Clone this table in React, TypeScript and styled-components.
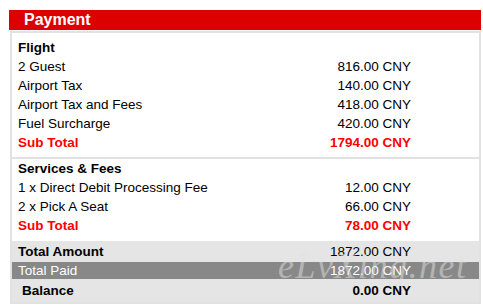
import React from "react";
import styled, { createGlobalStyle } from "styled-components";

const Global = createGlobalStyle`
  html, body { margin: 0; padding: 0; background: #fff; overflow: hidden; }
  body { font-family: "Liberation Sans", Arial, sans-serif; color: #000; }
`;

const Page = styled.div`
  position: relative;
  width: 472px;
  padding: 10px 0 0 9px;
`;

const Header = styled.div`
  height: 20px;
  background: #dd0000;
  color: #fff;
  font-weight: bold;
  font-size: 16px;
  line-height: 20px;
  padding-left: 15px;
`;

const Box = styled.div`
  margin: 1px 0 0 1px;
  border: 2px solid #e2e2e2;
  background: #fff;
`;

const Section = styled.div<{ $top: number; $bottom: number; $divider?: boolean }>`
  padding: ${(p) => p.$top}px 68px ${(p) => p.$bottom}px 6px;
  border-top: ${(p) => (p.$divider ? "2px solid #e2e2e2" : "none")};
`;

const Row = styled.div<{ $tone?: "red" }>`
  display: flex;
  justify-content: space-between;
  height: 19px;
  line-height: 19px;
  font-size: 13.5px;
  color: ${(p) => (p.$tone === "red" ? "#ff0000" : "#000")};
  font-weight: ${(p) => (p.$tone === "red" ? "bold" : "normal")};
`;

const Title = styled.div`
  height: 19px;
  line-height: 19px;
  font-size: 13.5px;
  font-weight: bold;
`;

const TotalRow = styled.div<{ $h: number; $dark?: boolean; $indent?: number }>`
  display: flex;
  justify-content: space-between;
  align-items: center;
  height: ${(p) => p.$h}px;
  padding: 0 68px 0 ${(p) => 6 + (p.$indent || 0)}px;
  background: ${(p) => (p.$dark ? "#888888" : "#e5e5e5")};
  color: ${(p) => (p.$dark ? "#fff" : "#000")};
  font-size: 13.5px;
`;

const Label = styled.span<{ $bold?: boolean }>`
  font-weight: ${(p) => (p.$bold ? "bold" : "normal")};
`;

const Watermark = styled.div`
  position: absolute;
  left: 278px;
  top: 246px;
  width: 196px;
  font-family: "Liberation Serif", serif;
  font-style: italic;
  font-size: 36px;
  line-height: 40px;
  letter-spacing: 1.5px;
  color: rgba(225, 225, 225, 0.5);
  pointer-events: none;
  white-space: nowrap;
`;

const flight = [
  ["2 Guest", "816.00 CNY"],
  ["Airport Tax", "140.00 CNY"],
  ["Airport Tax and Fees", "418.00 CNY"],
  ["Fuel Surcharge", "420.00 CNY"],
];

const services = [
  ["1 x Direct Debit Processing Fee", "12.00 CNY"],
  ["2 x Pick A Seat", "66.00 CNY"],
];

export default function App() {
  return (
    <>
      <Global />
      <Page>
        <Header>Payment</Header>
        <Box>
          <Section $top={5} $bottom={5}>
            <Title>Flight</Title>
            {flight.map(([l, v]) => (
              <Row key={l}>
                <span>{l}</span>
                <span>{v}</span>
              </Row>
            ))}
            <Row $tone="red">
              <span>Sub Total</span>
              <span>1794.00 CNY</span>
            </Row>
          </Section>
          <Section $top={0} $bottom={6} $divider>
            <Title>Services &amp; Fees</Title>
            {services.map(([l, v]) => (
              <Row key={l}>
                <span>{l}</span>
                <span>{v}</span>
              </Row>
            ))}
            <Row $tone="red">
              <span>Sub Total</span>
              <span>78.00 CNY</span>
            </Row>
          </Section>
          <TotalRow $h={21}>
            <Label $bold>Total Amount</Label>
            <Label>1872.00 CNY</Label>
          </TotalRow>
          <TotalRow $h={17} $dark>
            <Label>Total Paid</Label>
            <Label>1872.00 CNY</Label>
          </TotalRow>
          <TotalRow $h={23} $indent={4}>
            <Label $bold>Balance</Label>
            <Label $bold>0.00 CNY</Label>
          </TotalRow>
        </Box>
        <Watermark>eLvXing.net</Watermark>
      </Page>
    </>
  );
}
